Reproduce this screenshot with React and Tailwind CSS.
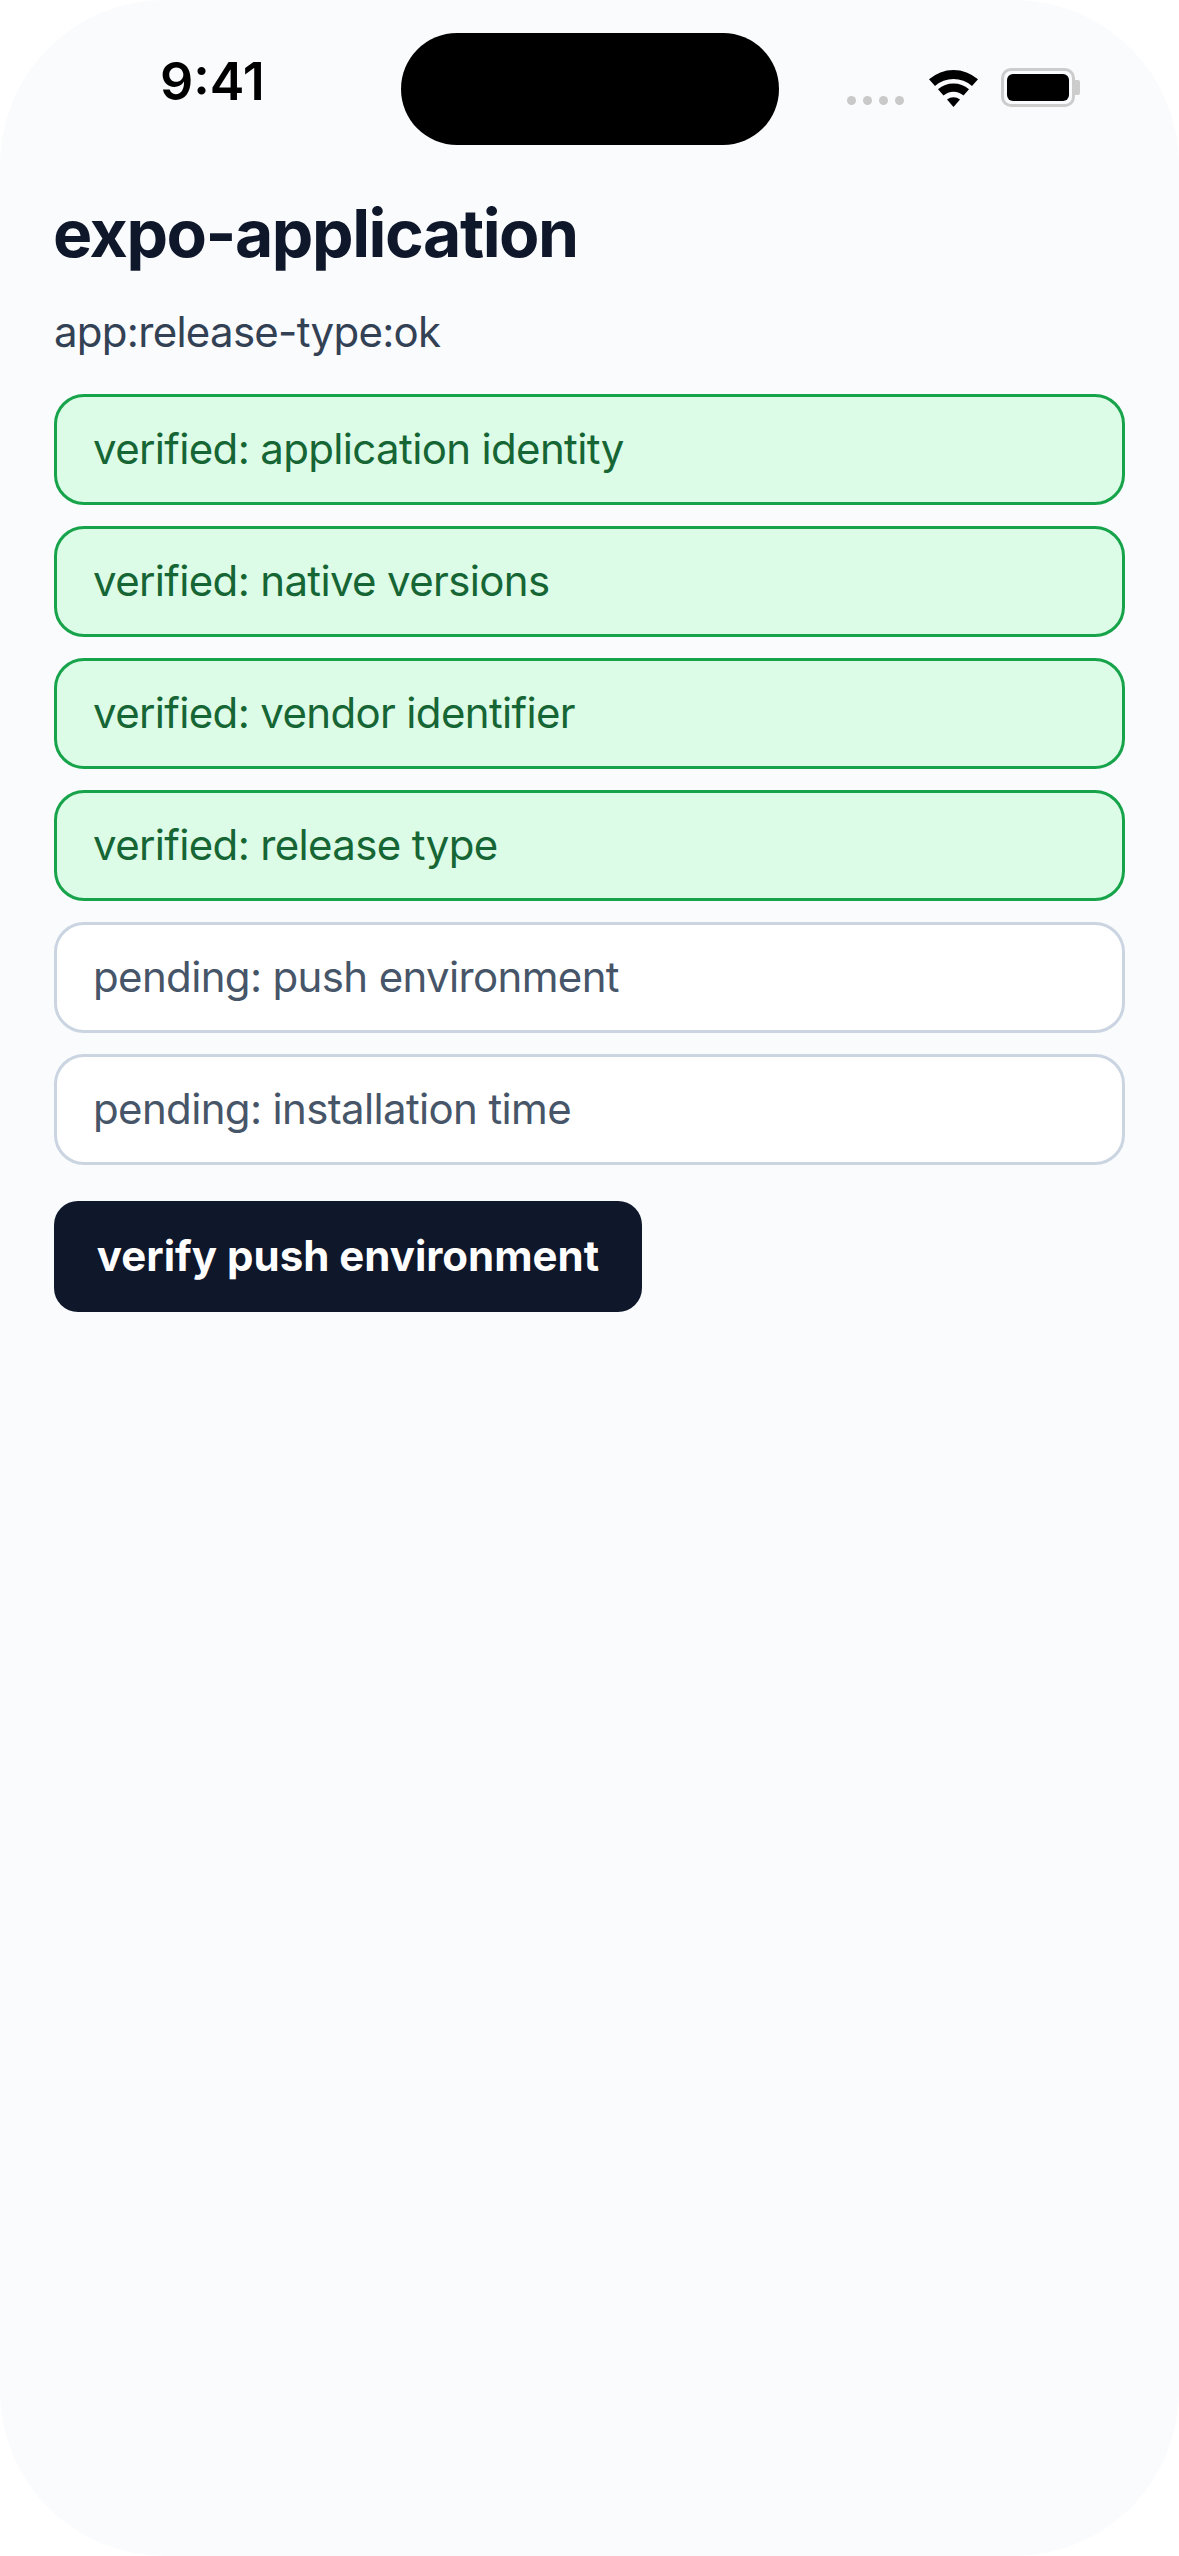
import React from 'react';

const checks = [
  { label: 'verified: application identity', done: true },
  { label: 'verified: native versions', done: true },
  { label: 'verified: vendor identifier', done: true },
  { label: 'verified: release type', done: true },
  { label: 'pending: push environment', done: false },
  { label: 'pending: installation time', done: false },
];

function WifiIcon() {
  return (
    <svg width="49" height="37" viewBox="0 0 49 37" fill="#000">
      <path d="M0 9.3A37 37 0 0 1 49 9.3L43 16A28 28 0 0 0 6 16Z" />
      <path d="M9 19.3A23.5 23.5 0 0 1 40 19.3L34.5 25.5A15 15 0 0 0 14.5 25.5Z" />
      <path d="M18 29.5A10.5 10.5 0 0 1 31 29.5L24.5 37Z" />
    </svg>
  );
}

function StatusBar() {
  return (
    <div className="flex items-start h-[145px] pt-[33px]">
      <div className="w-[401px] pl-[160px] pt-[20px] text-[52px] leading-[58px] font-semibold text-black">9:41</div>
      <div className="w-[378px] h-[112px] rounded-[56px] bg-black" />
      <div className="flex items-start pl-[68px]">
        <div className="flex gap-[7px] pt-[63px]">
          <span className="w-[9px] h-[9px] rounded-full bg-[#c9c9c9]" />
          <span className="w-[9px] h-[9px] rounded-full bg-[#c9c9c9]" />
          <span className="w-[9px] h-[9px] rounded-full bg-[#c9c9c9]" />
          <span className="w-[9px] h-[9px] rounded-full bg-[#c9c9c9]" />
        </div>
        <div className="ml-[25px] pt-[37px]">
          <WifiIcon />
        </div>
        <div className="ml-[23px] mt-[35px] flex items-center">
          <div className="w-[74px] h-[39px] rounded-[10px] border-[3px] border-[#cccccc] p-[3px]">
            <div className="w-full h-full rounded-[6px] bg-black" />
          </div>
          <div className="w-[5px] h-[15px] rounded-r-[2px] bg-[#cccccc]" />
        </div>
      </div>
    </div>
  );
}

function CheckRow({ label, done }) {
  return (
    <div
      className={
        done
          ? 'h-[111px] pb-[2px] flex items-center px-[36px] rounded-[30px] border-[3px] border-[#16a34a] bg-[#dcfce7] text-[#166534] text-[42px] tracking-[-0.65px]'
          : 'h-[111px] pb-[2px] flex items-center px-[36px] rounded-[30px] border-[3px] border-[#cbd5e1] bg-white text-[#475569] text-[42px] tracking-[-0.65px]'
      }
    >
      {label}
    </div>
  );
}

export default function App() {
  return (
    <div className="bg-white" style={{ fontFamily: 'Inter, sans-serif' }}>
      <div className="w-[1179px] h-[2556px] rounded-[165px] bg-[#f9fbfd] overflow-hidden">
        <StatusBar />
        <div className="px-[54px]">
          <h1 className="mt-[50px] -ml-[1px] text-[66px] leading-[76px] font-bold tracking-[-1.45px] text-[#0f172a]">expo-application</h1>
          <p className="mt-[34px] text-[42px] leading-[54px] tracking-[-0.72px] text-[#334155]">app:release-type:ok</p>
          <div className="mt-[35px] flex flex-col gap-[21px]">
            {checks.map((c) => (
              <CheckRow key={c.label} label={c.label} done={c.done} />
            ))}
          </div>
          <button className="mt-[36px] h-[111px] pb-[2px] px-[42px] w-[588px] rounded-[24px] bg-[#0f172a] text-white text-[42px] font-bold">
            verify push environment
          </button>
        </div>
      </div>
    </div>
  );
}
